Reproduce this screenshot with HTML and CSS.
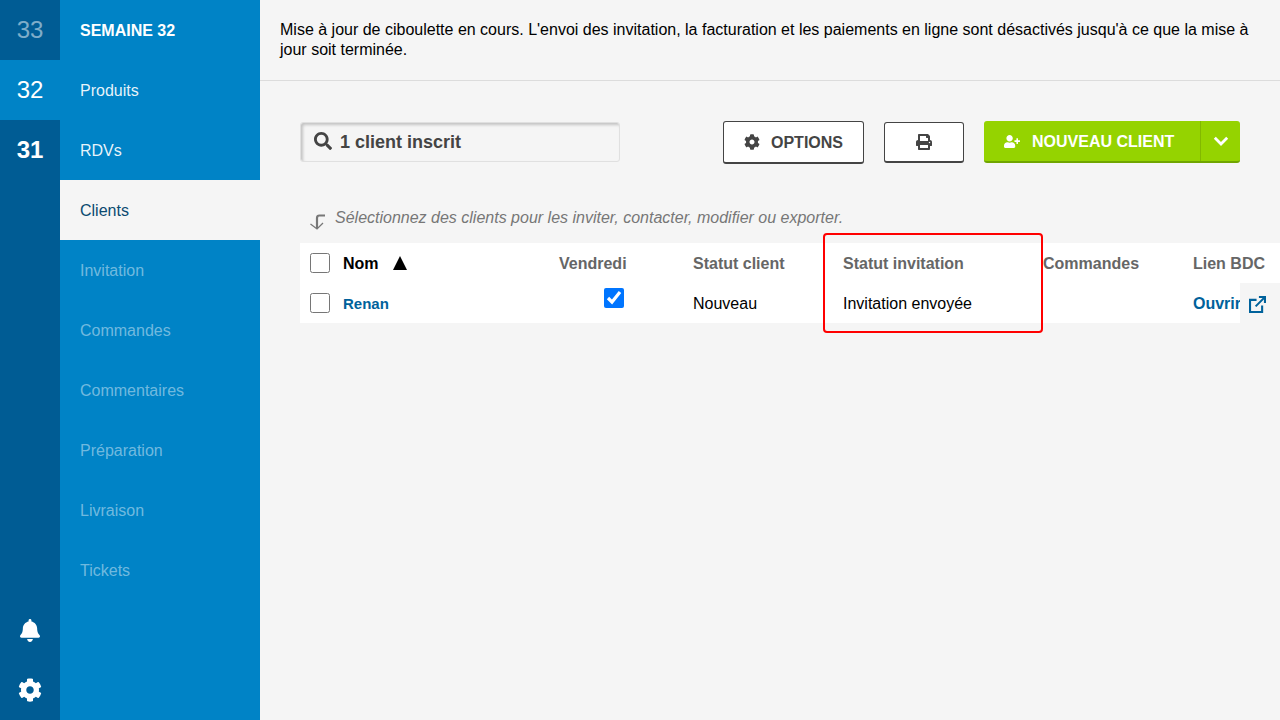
FILE: index.html
```html
<!DOCTYPE html>
<html lang="fr">
<head>
<meta charset="utf-8">
<title>Clients</title>
<link rel="stylesheet" href="styles.css">
</head>
<body>
<svg class="defs" aria-hidden="true">
  <symbol id="i-cog" viewBox="0 0 512 512"><path d="M487.4 315.7l-42.6-24.6c4.3-23.2 4.3-47 0-70.2l42.6-24.6c4.9-2.8 7.1-8.6 5.5-14-11.1-35.6-30-67.8-54.7-94.6-3.8-4.1-10-5.1-14.8-2.3L380.8 110c-17.9-15.4-38.5-27.3-60.8-35.1V25.8c0-5.6-3.9-10.5-9.4-11.7-36.7-8.2-74.3-7.8-109.2 0-5.5 1.2-9.4 6.1-9.4 11.7V75c-22.2 7.9-42.8 19.8-60.8 35.1L88.7 85.5c-4.9-2.8-11-1.9-14.8 2.3-24.7 26.7-43.6 58.9-54.7 94.6-1.7 5.4.6 11.2 5.5 14L67.3 221c-4.3 23.2-4.3 47 0 70.2l-42.6 24.6c-4.9 2.8-7.1 8.6-5.5 14 11.1 35.6 30 67.8 54.7 94.6 3.8 4.1 10 5.1 14.8 2.3l42.6-24.6c17.9 15.4 38.5 27.3 60.8 35.1v49.2c0 5.6 3.9 10.5 9.4 11.7 36.7 8.2 74.3 7.8 109.2 0 5.5-1.2 9.4-6.1 9.4-11.7v-49.2c22.2-7.9 42.8-19.8 60.8-35.1l42.6 24.6c4.9 2.8 11 1.9 14.8-2.3 24.7-26.7 43.6-58.9 54.7-94.6 1.5-5.5-.7-11.3-5.6-14.1zM256 336c-44.1 0-80-35.9-80-80s35.9-80 80-80 80 35.9 80 80-35.9 80-80 80z"/></symbol>
  <symbol id="i-bell" viewBox="0 0 448 512"><path d="M224 512c35.32 0 63.97-28.65 63.97-64H160.03c0 35.35 28.65 64 63.97 64zm215.39-149.71c-19.32-20.76-55.47-51.99-55.47-154.29 0-77.7-54.48-139.9-127.94-155.16V32c0-17.67-14.32-32-31.98-32s-31.98 14.33-31.98 32v20.84C118.56 68.1 64.08 130.3 64.08 208c0 102.3-36.15 133.53-55.47 154.29-6 6.45-8.66 14.16-8.61 21.71.11 16.4 12.98 32 32.1 32h383.8c19.12 0 32-15.6 32.1-32 .05-7.55-2.61-15.27-8.61-21.71z"/></symbol>
  <symbol id="i-search" viewBox="0 0 512 512"><path d="M505 442.7L405.3 343c-4.5-4.5-10.6-7-17-7H372c27.6-35.3 44-79.7 44-128C416 93.1 322.9 0 208 0S0 93.1 0 208s93.1 208 208 208c48.3 0 92.7-16.4 128-44v16.3c0 6.4 2.5 12.5 7 17l99.7 99.7c9.4 9.4 24.6 9.4 33.9 0l28.3-28.3c9.4-9.4 9.4-24.6.1-34zM208 336c-70.7 0-128-57.2-128-128 0-70.7 57.2-128 128-128 70.7 0 128 57.2 128 128 0 70.7-57.2 128-128 128z"/></symbol>
  <symbol id="i-print" viewBox="0 0 512 512"><path d="M448 192V77.25c0-8.49-3.37-16.62-9.37-22.63L393.37 9.37c-6-6-14.14-9.37-22.63-9.37H96C78.33 0 64 14.33 64 32v160c-35.35 0-64 28.65-64 64v112c0 8.84 7.16 16 16 16h48v96c0 17.67 14.33 32 32 32h320c17.67 0 32-14.33 32-32v-96h48c8.84 0 16-7.16 16-16V256c0-35.35-28.65-64-64-64zm-64 256H128v-96h256v96zm0-224H128V64h192v48c0 8.84 7.16 16 16 16h48v96zm48 72c-13.25 0-24-10.75-24-24 0-13.26 10.75-24 24-24s24 10.74 24 24c0 13.25-10.75 24-24 24z"/></symbol>
  <symbol id="i-user-plus" viewBox="0 0 640 512"><path d="M624 208h-64v-64c0-8.8-7.2-16-16-16h-32c-8.8 0-16 7.2-16 16v64h-64c-8.8 0-16 7.2-16 16v32c0 8.8 7.2 16 16 16h64v64c0 8.8 7.2 16 16 16h32c8.8 0 16-7.2 16-16v-64h64c8.8 0 16-7.2 16-16v-32c0-8.8-7.2-16-16-16zm-400 48c70.7 0 128-57.3 128-128S294.7 0 224 0 96 57.3 96 128s57.3 128 128 128zm89.6 32h-16.7c-22.2 10.2-46.9 16-72.9 16s-50.6-5.8-72.9-16h-16.7C60.2 288 0 348.2 0 422.4V464c0 26.5 21.5 48 48 48h352c26.5 0 48-21.5 48-48v-41.6c0-74.2-60.2-134.4-134.4-134.4z"/></symbol>
</svg>

<nav class="weeks">
  <a class="week week-future">33</a>
  <a class="week week-active">32</a>
  <a class="week week-past">31</a>
  <div class="week-spacer"></div>
  <a class="week-icon"><svg class="icon-bell"><use href="#i-bell"/></svg></a>
  <a class="week-icon"><svg class="icon-cog"><use href="#i-cog"/></svg></a>
</nav>

<nav class="menu">
  <div class="menu-item menu-title">SEMAINE 32</div>
  <a class="menu-item">Produits</a>
  <a class="menu-item">RDVs</a>
  <a class="menu-item menu-current">Clients</a>
  <a class="menu-item menu-off">Invitation</a>
  <a class="menu-item menu-off">Commandes</a>
  <a class="menu-item menu-off">Commentaires</a>
  <a class="menu-item menu-off">Préparation</a>
  <a class="menu-item menu-off">Livraison</a>
  <a class="menu-item menu-off">Tickets</a>
</nav>

<main class="main">
  <div class="notice">Mise à jour de ciboulette en cours. L'envoi des invitation, la facturation et les paiements en ligne sont désactivés jusqu'à ce que la mise à jour soit terminée.</div>

  <div class="content">
    <div class="toolbar">
      <div class="search">
        <svg class="icon-search"><use href="#i-search"/></svg>
        <span>1 client inscrit</span>
      </div>
      <button class="btn btn-options"><svg class="icon-btn"><use href="#i-cog"/></svg><span class="btn-label">OPTIONS</span></button>
      <button class="btn btn-print"><svg class="icon-btn"><use href="#i-print"/></svg></button>
      <div class="split">
        <button class="split-main"><svg class="icon-user"><use href="#i-user-plus"/></svg><span class="btn-label">NOUVEAU CLIENT</span></button>
        <button class="split-caret"><svg class="icon-chevron" viewBox="0 0 16 10"><path d="M1.800 1.800 8 8l6.200-6.200"/></svg></button>
      </div>
    </div>

    <p class="hint">
      <svg class="icon-hint" viewBox="0 0 18 18"><path class="hint-stem" d="M16 2.500H10.500Q8 2.500 8 5V15"/><path class="hint-head" d="M1.500 11 8 16 14 10"/></svg>
      <span>Sélectionnez des clients pour les inviter, contacter, modifier ou exporter.</span>
    </p>

    <div class="table-wrap">
      <table class="clients">
        <colgroup>
          <col class="c-check"><col class="c-name"><col class="c-day"><col class="c-status"><col class="c-invite"><col class="c-orders"><col class="c-link">
        </colgroup>
        <thead>
          <tr>
            <th class="cell-check"><input type="checkbox" class="check"></th>
            <th class="th-name">Nom<span class="sort"></span></th>
            <th>Vendredi</th>
            <th>Statut client</th>
            <th>Statut invitation</th>
            <th>Commandes</th>
            <th>Lien BDC</th>
          </tr>
        </thead>
        <tbody>
          <tr>
            <td class="cell-check"><input type="checkbox" class="check"></td>
            <td><a class="link link-name">Renan</a></td>
            <td class="td-day"><input type="checkbox" class="check" checked></td>
            <td>Nouveau</td>
            <td>Invitation envoyée</td>
            <td></td>
            <td class="td-link"><a class="link">Ouvrir</a><span class="open-box"><svg class="icon-open" viewBox="0 0 18 18"><path d="M8 4.100H1.100V16.900H13.900V10M7 11 16 2M10.500 1.100H16.900V7.500"/></svg></span></td>
          </tr>
        </tbody>
      </table>
      <div class="highlight"></div>
    </div>
  </div>
</main>
</body>
</html>
```
FILE: styles.css
```css
* { box-sizing: border-box; }
html, body { margin: 0; height: 100%; }
body {
  display: flex;
  width: 1280px;
  height: 720px;
  overflow: hidden;
  background: #f5f5f5;
  font-family: "Liberation Sans", Arial, sans-serif;
  font-size: 16px;
  line-height: 20px;
  color: #000;
}
.defs { display: none; }

.weeks {
  width: 60px;
  flex: none;
  display: flex;
  flex-direction: column;
  background: #005c94;
}
.week {
  height: 60px;
  display: flex;
  align-items: center;
  justify-content: center;
  font-size: 24px;
  line-height: normal;
  color: #fff;
}
.week-future { color: rgba(255, 255, 255, .5); }
.week-active { background: #0083c6; }
.week-past { font-weight: 700; }
.week-spacer { flex: 1; }
.week-icon {
  height: 60px;
  display: flex;
  align-items: center;
  justify-content: center;
  fill: #fff;
}
.icon-bell { width: 20px; height: 23px; margin-top: 1px; }
.icon-cog { width: 24px; height: 24px; }

.menu {
  width: 200px;
  flex: none;
  background: #0083c6;
}
.menu-item {
  display: flex;
  align-items: center;
  height: 60px;
  padding: 2px 0 0 20px;
  color: rgba(255, 255, 255, .92);
}
.menu-title { font-weight: 700; color: #fff; }
.menu-current { background: #f5f5f5; color: #0a4a70; }
.menu-off { color: rgba(255, 255, 255, .45); }

.main { flex: 1; min-width: 0; }
.notice {
  height: 81px;
  padding: 20px 20px 0;
  border-bottom: 1px solid #dcdcdc;
}
.content { padding: 40px 0 0 40px; }

.toolbar {
  display: flex;
  align-items: flex-start;
  width: 940px;
  height: 43px;
}
.search {
  width: 320px;
  height: 40px;
  margin-top: 1px;
  margin-right: auto;
  display: flex;
  align-items: center;
  padding-left: 13px;
  border: 1px solid #e0e0e0;
  border-radius: 3px;
  box-shadow: inset 2px 2px 3px rgba(0, 0, 0, .2);
  font-size: 18px;
  font-weight: 700;
  color: #444;
}
.icon-search { width: 18px; height: 18px; margin-right: 8px; margin-top: -2px; fill: #444; }

.btn {
  display: flex;
  align-items: center;
  justify-content: center;
  background: #fff;
  border: 1px solid #444;
  border-bottom-width: 2px;
  border-radius: 3px;
  font: 700 16px/20px "Liberation Sans", Arial, sans-serif;
  color: #444;
  padding: 0;
}
.btn-label { padding-top: 2px; }
.btn-options { width: 141px; height: 43px; margin-right: 20px; }
.btn-print { width: 80px; height: 41px; margin-top: 1px; margin-right: 20px; }
.icon-btn { width: 16px; height: 16px; fill: #444; }
.btn-options .icon-btn { margin-right: 11px; }

.split {
  display: flex;
  width: 256px;
  height: 42px;
  background: #95d300;
  border-bottom: 2px solid #70a500;
  border-radius: 3px;
}
.split-main, .split-caret {
  background: none;
  border: 0;
  padding: 0;
  display: flex;
  align-items: center;
  color: #fff;
  font: 700 16px/20px "Liberation Sans", Arial, sans-serif;
}
.split-main { width: 216px; padding-left: 20px; }
.split-caret {
  width: 40px;
  justify-content: center;
  border-left: 1px solid #82b800;
}
.icon-user { width: 16px; height: 13px; margin-right: 12px; fill: #fff; }
.icon-chevron { width: 16px; height: 10px; fill: none; stroke: #fff; stroke-width: 2.800; }

.hint {
  display: flex;
  align-items: flex-start;
  margin: 0;
  padding: 44px 0 0 9px;
  height: 79px;
  font-style: italic;
  color: #777;
}
.icon-hint { width: 18px; height: 18px; margin-top: 5px; margin-right: 8px; fill: none; stroke: #777; }
.hint-stem { stroke-width: 2.200; }
.hint-head { stroke-width: 1.300; }

.table-wrap { position: relative; width: 980px; }
.clients {
  width: 980px;
  table-layout: fixed;
  border-collapse: collapse;
  background: #fff;
}
.c-check { width: 33px; }
.c-name { width: 216px; }
.c-day { width: 134px; }
.c-status { width: 150px; }
.c-invite { width: 200px; }
.c-orders { width: 150px; }
.c-link { width: 97px; }
.clients th, .clients td {
  height: 40px;
  padding: 2px 0 0 10px;
  text-align: left;
  white-space: nowrap;
}
.clients th { font-weight: 700; color: #666; }
.clients th.th-name { color: #000; }
.clients .cell-check { padding-top: 0; }
.clients .td-day { vertical-align: top; padding: 5px 0 0 55px; }
.sort {
  display: inline-block;
  margin-left: 14px;
  border-left: 7px solid transparent;
  border-right: 7px solid transparent;
  border-bottom: 14px solid #000;
  vertical-align: -1px;
}
.check { display: block; width: 20px; height: 20px; margin: 0; }
.link { font-weight: 700; color: #00629b; }
.link-name { font-size: 15px; }
.td-link { position: relative; }
.open-box {
  position: absolute;
  left: 57px;
  top: 0;
  width: 40px;
  height: 40px;
  display: flex;
  align-items: center;
  justify-content: center;
  background: #f5f5f5;
}
.icon-open {
  width: 17px;
  height: 17px;
  margin-right: 6px;
  margin-top: 2px;
  fill: none;
  stroke: #00629b;
  stroke-width: 2.200;
}

.highlight {
  position: absolute;
  left: 523px;
  top: -10px;
  width: 220px;
  height: 100px;
  border: 2px solid #f00;
  border-radius: 4px;
  pointer-events: none;
}
```
